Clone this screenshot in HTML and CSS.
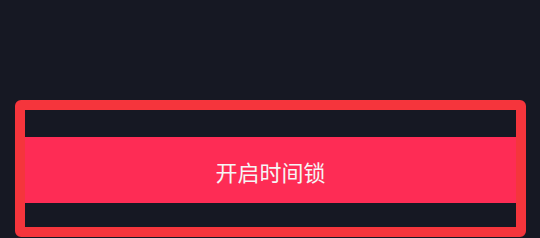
FILE: index.html
```html
<!DOCTYPE html>
<html lang="zh-CN">
<head>
    <meta charset="UTF-8">
    <meta name="viewport" content="width=device-width, initial-scale=1.0">
    <title>时间锁</title>
    <link rel="stylesheet" href="styles.css">
</head>
<body>
    <div class="page">
        <div class="highlight">
            <button class="lock-btn">开启时间锁</button>
        </div>
    </div>
</body>
</html>
```

FILE: styles.css
```css
html, body {
    margin: 0;
    padding: 0;
}
body {
    background-color: #161823;
    font-family: "Noto Sans CJK SC", "Noto Sans", sans-serif;
    width: 540px;
    height: 238px;
    overflow: hidden;
}
.page {
    padding: 100px 14px 0 15px;
}
.highlight {
    border: 10px solid #f5353c;
    border-radius: 6px;
    padding: 27px 0 24px 0;
}
.lock-btn {
    display: block;
    width: 100%;
    height: 66px;
    border: none;
    margin: 0;
    background-color: #fe2c55;
    color: #f6f6f6;
    font-family: "Noto Sans CJK SC", "Noto Sans", sans-serif;
    font-size: 22px;
    padding: 0;
    padding-top: 1px;
}
```
